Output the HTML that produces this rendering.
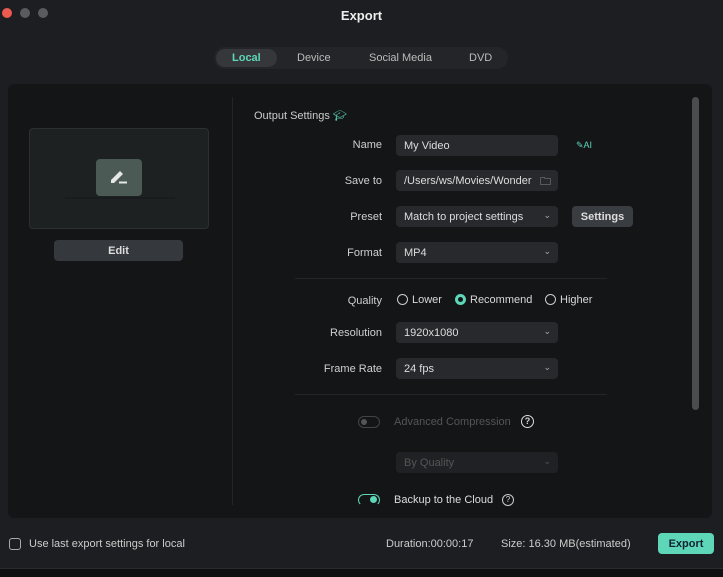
<!DOCTYPE html>
<html><head><style>
*{margin:0;padding:0;box-sizing:border-box}
body{width:723px;height:577px;background:#1d1e21;font-family:"Liberation Sans",sans-serif;color:#d8d8d8;position:relative;overflow:hidden;font-size:11px}
.a{position:absolute}
.dot{position:absolute;top:8px;width:10px;height:10px;border-radius:50%;background:#5a5b5e}
.lab{position:absolute;text-align:right;width:100px;left:282px;font-size:11px;color:#d0d0d0}
.inp{position:absolute;left:396px;width:162px;height:21px;background:#27292d;border-radius:4px;padding:5px 8px;font-size:11px;color:#ddd}
.chev{position:absolute;right:7px;top:4px;font-size:9px;color:#aaa}
.hr{position:absolute;left:295px;width:312px;height:1px;background:#232528}
.radio{display:inline-block;width:11px;height:11px;border:1px solid #ccc;border-radius:50%;vertical-align:-2px;margin-right:4px;position:relative}
</style></head><body>
<div class="dot" style="left:2px;background:#ec5a50"></div>
<div class="dot" style="left:20px"></div>
<div class="dot" style="left:38px"></div>
<div class="a" style="left:0;width:723px;top:8px;text-align:center;font-weight:bold;font-size:13px;color:#eee">Export</div>
<div class="a" style="left:214px;top:47px;width:294px;height:22px;background:#232528;border-radius:11px"></div>
<div class="a" style="left:216px;top:49px;width:61px;height:18px;background:#35373b;border-radius:9px"></div>
<div class="a" style="left:232px;top:52px;font-size:11px;font-weight:bold;color:#5ed6b8">Local</div>
<div class="a" style="left:297px;top:52px;color:#bbb">Device</div>
<div class="a" style="left:369px;top:52px;color:#bbb">Social Media</div>
<div class="a" style="left:469px;top:52px;color:#bbb">DVD</div>
<div class="a" style="left:8px;top:84px;width:704px;height:434px;background:#141517;border-radius:6px"></div>
<div class="a" style="left:232px;top:97px;width:1px;height:408px;background:#222427"></div>
<div class="a" style="left:692px;top:97px;width:7px;height:313px;background:#4a4c50;border-radius:4px"></div>
<div class="a" style="left:29px;top:128px;width:180px;height:101px;background:#1e2122;border:1px solid #2d3032;border-radius:4px"></div>
<div class="a" style="left:96px;top:159px;width:46px;height:37px;background:#4b5a55;border-radius:4px"></div>
<div class="a" style="left:65px;top:197px;width:110px;height:2px;background:#191b1c"></div>
<svg class="a" style="left:106px;top:166px" width="26" height="22"><path d="M5 14 L14 5 L17 8 L8 17 L5 17 Z" fill="#e6e6e6"/><path d="M13 16.5 H21" stroke="#e6e6e6" stroke-width="2"/></svg>
<div class="a" style="left:54px;top:240px;width:129px;height:21px;background:#35383d;border-radius:4px;text-align:center;padding-top:5px;font-weight:bold;color:#ddd">Edit</div>
<div class="a" style="left:254px;top:109px;color:#ccc">Output Settings <span style="color:#5ed6b8">🎓︎</span></div>
<div class="lab" style="top:139px">Name</div>
<div class="inp" style="top:135px;width:162px">My Video</div>
<div class="a" style="left:576px;top:140px;color:#5ed6b8;font-size:9px">✎AI</div>
<div class="lab" style="top:175px">Save to</div>
<div class="inp" style="top:170px">/Users/ws/Movies/Wonder<span class="chev" style="top:3px;font-size:11px;color:#ddd">🗀</span></div>
<div class="lab" style="top:211px">Preset</div>
<div class="inp" style="top:206px">Match to project settings<span class="chev">⌄</span></div>
<div class="a" style="left:572px;top:206px;width:61px;height:21px;background:#393c41;border-radius:4px;text-align:center;padding-top:5px;font-weight:bold;color:#ddd">Settings</div>
<div class="lab" style="top:247px">Format</div>
<div class="inp" style="top:242px">MP4<span class="chev">⌄</span></div>
<div class="hr" style="top:278px"></div>
<div class="lab" style="top:295px">Quality</div>
<div class="a" style="left:397px;top:294px"><span class="radio"></span>Lower</div>
<div class="a" style="left:455px;top:294px"><span class="radio" style="border-color:#5ed6b8;border-width:3px"></span>Recommend</div>
<div class="a" style="left:545px;top:294px"><span class="radio"></span>Higher</div>
<div class="lab" style="top:327px">Resolution</div>
<div class="inp" style="top:322px">1920x1080<span class="chev">⌄</span></div>
<div class="lab" style="top:363px">Frame Rate</div>
<div class="inp" style="top:358px">24 fps<span class="chev">⌄</span></div>
<div class="hr" style="top:394px"></div>
<div class="a" style="left:358px;top:416px;width:22px;height:12px;border:1px solid #444;border-radius:6px"><div style="margin:2px;width:6px;height:6px;border-radius:50%;background:#555"></div></div>
<div class="a" style="left:394px;top:416px;color:#555">Advanced Compression</div>
<div class="a" style="left:521px;top:415px;width:13px;height:13px;border:1.5px solid #ddd;border-radius:50%;font-size:9px;text-align:center;font-weight:bold">?</div>
<div class="inp" style="top:452px;background:#1f2124;color:#555">By Quality<span class="chev" style="color:#555">⌄</span></div>
<div class="a" style="left:358px;top:494px;width:22px;height:12px;border:1.5px solid #5ed6b8;border-radius:6px;border-bottom-color:transparent"><div style="margin:1px 0 0 11px;width:7px;height:7px;border-radius:50%;background:#5ed6b8"></div></div>
<div class="a" style="left:394px;top:494px;color:#ddd">Backup to the Cloud</div>
<div class="a" style="left:502px;top:494px;width:12px;height:12px;border:1px solid #ccc;border-radius:50%;font-size:8px;text-align:center">?</div>
<div class="a" style="left:9px;top:538px;width:12px;height:12px;border:1px solid #aaa;border-radius:3px"></div>
<div class="a" style="left:29px;top:538px;color:#ccc">Use last export settings for local</div>
<div class="a" style="left:386px;top:538px;color:#ccc">Duration:00:00:17</div>
<div class="a" style="left:501px;top:538px;color:#ccc">Size: 16.30 MB(estimated)</div>
<div class="a" style="left:658px;top:533px;width:56px;height:21px;background:#5ed6b8;border-radius:4px;text-align:center;padding-top:5px;font-weight:bold;color:#123">Export</div>
<div class="a" style="left:0;top:568px;width:723px;height:9px;background:#0f1011;border-top:1px solid #2a2b2e"></div>
</body></html>
